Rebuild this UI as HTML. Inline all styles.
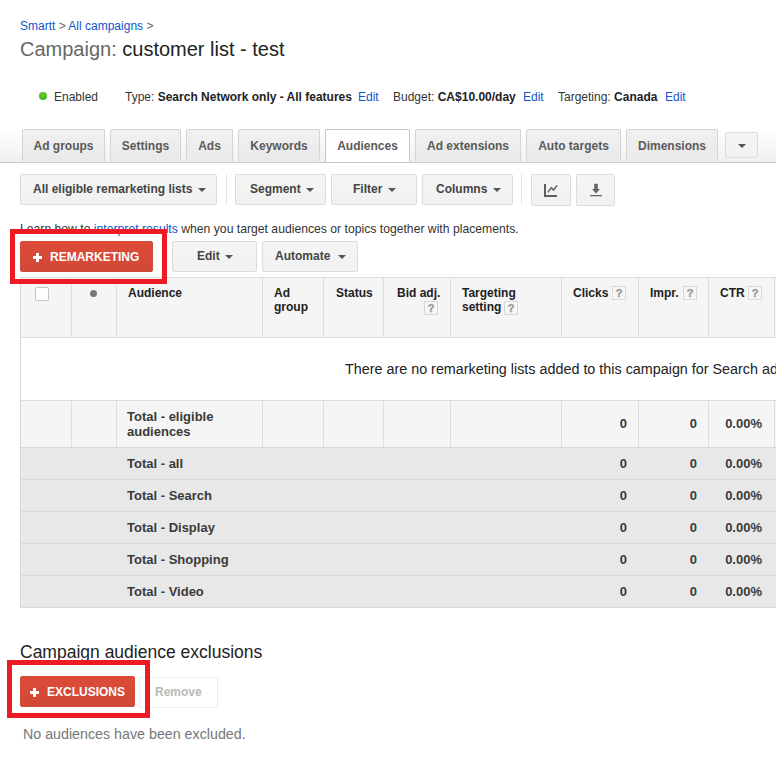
<!DOCTYPE html>
<html><head><meta charset="utf-8">
<style>
*{box-sizing:border-box;margin:0;padding:0}
html,body{width:776px;height:761px;overflow:hidden;background:#fff}
body{font-family:"Liberation Sans",sans-serif;font-size:12px;color:#222;position:relative}
.a{position:absolute;white-space:nowrap}
.lnk{color:#15c}
.b{font-weight:bold}
/* tabs */
#tabbar{position:absolute;left:0;top:120px;width:776px;height:43px;background:linear-gradient(to bottom,#fff 0px,#fff 9px,#f0f0f0 42px)}
#tabline{position:absolute;left:0;top:162px;width:776px;height:1px;background:#c8c8c8}
.tab{position:absolute;top:9px;height:32px;border:1px solid #dcdcdc;border-bottom:none;background:linear-gradient(#f1f1f1,#e9e9e9);color:#5a5a5a;font-weight:bold;font-size:12px;line-height:33px;text-align:center;border-radius:2px 2px 0 0;border-color:#d4d4d4}
.tab.act{height:33px;background:#fff;border-color:#c8c8c8;color:#5a5a5a}
.btn{position:absolute;height:31px;border:1px solid #dcdcdc;border-radius:2px;background:linear-gradient(#f5f5f5,#f1f1f1);color:#444;font-weight:bold;font-size:12px;line-height:29px}
.btn span{position:absolute;top:0}
.arr{position:absolute;width:0;height:0;border-left:4px solid transparent;border-right:4px solid transparent;border-top:4.5px solid #555}
.sep{position:absolute;width:1px;background:#e5e5e5}
.red{position:absolute;height:31px;border:1px solid #d44a38;border-radius:2px;background:linear-gradient(#dd4b39,#d14836);color:#fff;font-weight:bold;font-size:12px;line-height:29px}
.red span{position:absolute;top:1px}
.plus{position:absolute;width:9px;height:9px}
.plus:before{content:"";position:absolute;left:3px;top:0;width:3px;height:9px;background:#fff}
.plus:after{content:"";position:absolute;left:0;top:3px;width:9px;height:3px;background:#fff}
.box{position:absolute;border:5px solid #ed1c24}
/* table */
.hl{position:absolute;background:#ddd;height:1px}
.vl{position:absolute;background:#ddd;width:1px}
.th{position:absolute;font-weight:bold;font-size:12px;line-height:14px;color:#222}
.q{display:inline-block;width:13px;height:13px;border:1px solid #ddd;background:#fafafa;color:#999;font-size:11px;line-height:11px;text-align:center;font-weight:bold;vertical-align:top}
.qa{position:absolute;width:14px;height:14px;border:1px solid #d8d8d8;background:#f7f7f7;color:#999;font-size:11px;line-height:13px;text-align:center;font-weight:bold;-webkit-text-stroke:0.5px #a8a8a8}
.tot{position:absolute;font-weight:bold;font-size:13px;line-height:16px;color:#3a3a3a}
.num{position:absolute;font-weight:bold;font-size:13px;line-height:16px;color:#3a3a3a;text-align:right}
</style></head><body>

<!-- breadcrumb -->
<div class="a" style="left:20px;top:19px;font-size:12px;line-height:14px;color:#666"><span class="lnk">Smartt</span> &gt; <span class="lnk">All campaigns</span> &gt;</div>
<div class="a" style="left:20px;top:37px;font-size:20px;line-height:24px"><span style="color:#666">Campaign:</span> <span style="color:#222">customer list - test</span></div>

<!-- status -->
<div class="a" style="left:39px;top:92px;width:8px;height:8px;border-radius:50%;background:radial-gradient(circle at 50% 35%,#6c3,#3a1)"></div>
<div class="a" style="left:54px;top:90px;line-height:14px;color:#333">Enabled</div>
<div class="a" style="left:125px;top:90px;line-height:14px;color:#333">Type: <b style="color:#222">Search Network only - All features</b></div>
<div class="a lnk" style="left:358px;top:90px;line-height:14px">Edit</div>
<div class="a" style="left:393px;top:90px;line-height:14px;color:#333">Budget: <b style="color:#222">CA$10.00/day</b></div>
<div class="a lnk" style="left:523px;top:90px;line-height:14px">Edit</div>
<div class="a" style="left:558px;top:90px;line-height:14px;color:#333">Targeting: <b style="color:#222">Canada</b></div>
<div class="a lnk" style="left:665px;top:90px;line-height:14px">Edit</div>

<!-- tabs -->
<div id="tabbar">
  <div class="tab" style="left:22px;width:83px">Ad groups</div>
  <div class="tab" style="left:110px;width:71px">Settings</div>
  <div class="tab" style="left:186px;width:47px">Ads</div>
  <div class="tab" style="left:238px;width:82px">Keywords</div>
  <div class="tab act" style="left:325px;width:85px">Audiences</div>
  <div class="tab" style="left:415px;width:106px">Ad extensions</div>
  <div class="tab" style="left:526px;width:95px">Auto targets</div>
  <div class="tab" style="left:626px;width:92px">Dimensions</div>
  <div class="btn" style="left:725px;top:12px;width:33px;height:26px"><div class="arr" style="left:12px;top:11px"></div></div>
</div>

<div id="tabline"></div>
<!-- toolbar 1 -->
<div class="btn" style="left:20px;top:174px;width:197px"><span style="left:12px">All eligible remarketing lists</span><div class="arr" style="left:177px;top:13px"></div></div>
<div class="sep" style="left:226px;top:174px;height:31px"></div>
<div class="btn" style="left:235px;top:174px;width:91px"><span style="left:14px">Segment</span><div class="arr" style="left:70px;top:13px"></div></div>
<div class="btn" style="left:331px;top:174px;width:86px"><span style="left:21px">Filter</span><div class="arr" style="left:56px;top:13px"></div></div>
<div class="btn" style="left:422px;top:174px;width:91px"><span style="left:13px">Columns</span><div class="arr" style="left:70px;top:13px"></div></div>
<div class="sep" style="left:521px;top:174px;height:31px"></div>
<div class="btn" style="left:531px;top:174px;width:40px;height:32px">
  <svg style="position:absolute;left:-1px;top:-1px" width="40" height="32" viewBox="0 0 40 32">
    <rect x="13" y="10" width="2" height="13" fill="#5f5f5f"/>
    <rect x="13" y="21" width="13" height="2" fill="#5f5f5f"/>
    <polyline points="17.2,17.9 20.3,13.6 22.5,16.1 25.7,11.9" fill="none" stroke="#6a6a6a" stroke-width="1.6" stroke-linecap="round" stroke-linejoin="round"/>
  </svg>
</div>
<div class="btn" style="left:576px;top:174px;width:39px;height:32px">
  <svg style="position:absolute;left:-1px;top:-1px" width="39" height="32" viewBox="0 0 39 32">
    <rect x="18.2" y="9.8" width="3.6" height="5.5" fill="#666"/>
    <polygon points="16.1,15 23.9,15 20,19.6" fill="#666"/>
    <rect x="14" y="21" width="12" height="1.3" fill="#666"/>
  </svg>
</div>

<!-- learn row -->
<div class="a" style="left:20px;top:222px;line-height:14px;font-size:12.2px;color:#333">Learn how to <span class="lnk">interpret results</span> when you target audiences or topics together with placements.</div>

<!-- toolbar 2 -->
<div class="red" style="left:20px;top:241px;width:133px"><div class="plus" style="left:12px;top:11px"></div><span style="left:29px">REMARKETING</span></div>
<div class="btn" style="left:172px;top:241px;width:85px"><span style="left:24px">Edit</span><div class="arr" style="left:52px;top:13px"></div></div>
<div class="btn" style="left:262px;top:241px;width:96px"><span style="left:12px">Automate</span><div class="arr" style="left:75px;top:13px"></div></div>

<!-- table -->
<div class="a" style="left:20px;top:277px;width:756px;height:61px;background:#f5f5f5"></div>
<div class="a" style="left:20px;top:338px;width:756px;height:63px;background:#fff"></div>
<div class="a" style="left:20px;top:401px;width:756px;height:46px;background:#f5f5f5"></div>
<div class="a" style="left:20px;top:447px;width:756px;height:161px;background:#e8e8e8"></div>

<div class="hl" style="left:20px;top:277px;width:756px"></div>
<div class="hl" style="left:20px;top:337px;width:756px"></div>
<div class="hl" style="left:20px;top:400px;width:756px"></div>
<div class="hl" style="left:20px;top:447px;width:756px;background:#d8d8d8"></div>
<div class="hl" style="left:20px;top:479px;width:756px;background:#d8d8d8"></div>
<div class="hl" style="left:20px;top:511px;width:756px;background:#d8d8d8"></div>
<div class="hl" style="left:20px;top:543px;width:756px;background:#d8d8d8"></div>
<div class="hl" style="left:20px;top:575px;width:756px;background:#d8d8d8"></div>
<div class="hl" style="left:20px;top:607px;width:756px;background:#d8d8d8"></div>

<div class="vl" style="left:20px;top:277px;height:331px;background:#d8d8d8"></div>
<div class="vl" style="left:774px;top:277px;height:61px"></div>
<div class="vl" style="left:71px;top:277px;height:61px"></div>
<div class="vl" style="left:116px;top:277px;height:61px"></div>
<div class="vl" style="left:262px;top:277px;height:61px"></div>
<div class="vl" style="left:323px;top:277px;height:61px"></div>
<div class="vl" style="left:383px;top:277px;height:61px"></div>
<div class="vl" style="left:450px;top:277px;height:61px"></div>
<div class="vl" style="left:561px;top:277px;height:61px"></div>
<div class="vl" style="left:638px;top:277px;height:61px"></div>
<div class="vl" style="left:708px;top:277px;height:61px"></div>

<div class="vl" style="left:71px;top:400px;height:47px"></div>
<div class="vl" style="left:116px;top:400px;height:47px"></div>
<div class="vl" style="left:262px;top:400px;height:47px"></div>
<div class="vl" style="left:323px;top:400px;height:47px"></div>
<div class="vl" style="left:383px;top:400px;height:47px"></div>
<div class="vl" style="left:450px;top:400px;height:47px"></div>
<div class="vl" style="left:561px;top:400px;height:47px"></div>
<div class="vl" style="left:638px;top:400px;height:47px"></div>
<div class="vl" style="left:708px;top:400px;height:47px"></div>
<div class="vl" style="left:774px;top:400px;height:47px"></div>

<!-- header content -->
<div class="a" style="left:35px;top:287px;width:14px;height:14px;border:1px solid #c4c4c4;background:#fff;border-radius:2px"></div>
<div class="a" style="left:90px;top:290px;width:7px;height:7px;border-radius:50%;background:#777"></div>
<div class="th" style="left:128px;top:286px">Audience</div>
<div class="th" style="left:274px;top:286px">Ad<br>group</div>
<div class="th" style="left:336px;top:286px">Status</div>
<div class="th" style="left:397px;top:286px">Bid adj.</div>
<div class="qa" style="left:424px;top:301px">?</div>
<div class="th" style="left:462px;top:286px">Targeting<br>setting</div>
<div class="qa" style="left:504px;top:301px">?</div>
<div class="th" style="left:573px;top:286px">Clicks</div>
<div class="qa" style="left:612px;top:286px">?</div>
<div class="th" style="left:650px;top:286px">Impr.</div>
<div class="qa" style="left:683px;top:286px">?</div>
<div class="th" style="left:720px;top:286px">CTR</div>
<div class="qa" style="left:748px;top:286px">?</div>

<div class="a" style="left:345px;top:361px;font-size:14.35px;line-height:16px;color:#222">There are no remarketing lists added to this campaign for Search ads.</div>

<!-- totals -->
<div class="tot" style="left:127px;top:409px;line-height:15px">Total - eligible<br>audiences</div>
<div class="num" style="left:561px;top:416px;width:66px">0</div>
<div class="num" style="left:638px;top:416px;width:59px">0</div>
<div class="num" style="left:708px;top:416px;width:54px">0.00%</div>

<div class="tot" style="left:127px;top:456px">Total - all</div>
<div class="num" style="left:561px;top:456px;width:66px">0</div>
<div class="num" style="left:638px;top:456px;width:59px">0</div>
<div class="num" style="left:708px;top:456px;width:54px">0.00%</div>

<div class="tot" style="left:127px;top:488px">Total - Search</div>
<div class="num" style="left:561px;top:488px;width:66px">0</div>
<div class="num" style="left:638px;top:488px;width:59px">0</div>
<div class="num" style="left:708px;top:488px;width:54px">0.00%</div>

<div class="tot" style="left:127px;top:520px">Total - Display</div>
<div class="num" style="left:561px;top:520px;width:66px">0</div>
<div class="num" style="left:638px;top:520px;width:59px">0</div>
<div class="num" style="left:708px;top:520px;width:54px">0.00%</div>

<div class="tot" style="left:127px;top:552px">Total - Shopping</div>
<div class="num" style="left:561px;top:552px;width:66px">0</div>
<div class="num" style="left:638px;top:552px;width:59px">0</div>
<div class="num" style="left:708px;top:552px;width:54px">0.00%</div>

<div class="tot" style="left:127px;top:584px">Total - Video</div>
<div class="num" style="left:561px;top:584px;width:66px">0</div>
<div class="num" style="left:638px;top:584px;width:59px">0</div>
<div class="num" style="left:708px;top:584px;width:54px">0.00%</div>

<!-- exclusions -->
<div class="a" style="left:20px;top:642px;font-size:17.5px;line-height:20px;color:#222">Campaign audience exclusions</div>
<div class="red" style="left:20px;top:676px;width:115px"><div class="plus" style="left:9px;top:11px"></div><span style="left:26px">EXCLUSIONS</span></div>
<div class="btn" style="left:139px;top:677px;width:79px;border-color:#eee;background:#fff;color:#b8b8b8"><span style="left:15px">Remove</span></div>
<div class="a" style="left:23px;top:726px;font-size:14.25px;line-height:16px;color:#777">No audiences have been excluded.</div>

<!-- red highlight boxes -->
<div class="box" style="left:10px;top:229px;width:157px;height:55px"></div>
<div class="box" style="left:7px;top:660px;width:143px;height:58px"></div>

</body></html>
